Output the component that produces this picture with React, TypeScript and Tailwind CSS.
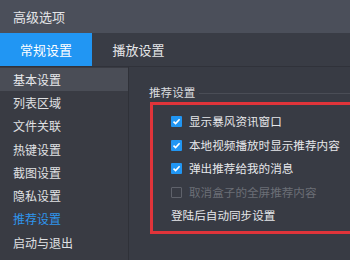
import { useState } from "react";

const navItems = [
  "基本设置",
  "列表区域",
  "文件关联",
  "热键设置",
  "截图设置",
  "隐私设置",
  "推荐设置",
  "启动与退出",
];

const options = [
  { id: 1, text: "显示暴风资讯窗口", checked: true, disabled: false },
  { id: 2, text: "本地视频播放时显示推荐内容", checked: true, disabled: false },
  { id: 3, text: "弹出推荐给我的消息", checked: true, disabled: false },
  { id: 4, text: "取消盒子的全屏推荐内容", checked: false, disabled: true },
];

const CheckBox = ({ checked, disabled }: { checked: boolean; disabled: boolean }) => {
  if (disabled) {
    return <span className="block shrink-0 w-[11px] h-[11px] border border-[#5f626b] rounded-[1px]" />;
  }
  return (
    <span className="flex shrink-0 items-center justify-center w-[11px] h-[11px] bg-[#2196f3] rounded-[1px]">
      {checked && (
        <svg width="9" height="9" viewBox="0 0 9 9">
          <path d="M1.5 4.6 L3.6 6.6 L7.6 2.2" fill="none" stroke="#fff" strokeWidth="1.6" />
        </svg>
      )}
    </span>
  );
};

const App = () => {
  const [tab, setTab] = useState(0);

  return (
    <div
      className="flex flex-col w-[350px] h-[260px] overflow-hidden bg-[#383b44] text-[#e4e5e8]"
      style={{ fontFamily: '"Noto Sans CJK SC", "Noto Sans", sans-serif' }}
    >
      <div className="flex items-center shrink-0 h-[33px] pl-[13px] bg-[#4b4f5a] text-[13px]">高级选项</div>
      <div className="flex shrink-0 h-[34px] bg-[#393c45] text-[13px] border-b border-[#30323a]">
        {["常规设置", "播放设置"].map((t, i) => (
          <div
            key={t}
            onClick={() => setTab(i)}
            className={
              i === tab
                ? "flex items-center justify-center w-[92px] bg-[#2196f3] text-white"
                : "flex items-center justify-center w-[93px] text-[#e4e5e8]"
            }
          >
            {t}
          </div>
        ))}
      </div>
      <div className="flex flex-1 min-h-0">
        <div className="flex flex-col shrink-0 w-[129px] pt-[1px] bg-[#393b43] border-r border-[#2f3138] text-[12px]">
          {navItems.map((item, i) => (
            <div
              key={item}
              className={
                i === 0
                  ? "flex items-center h-[23.3px] pl-[13px] bg-[#4a4d56] text-[#e8e9ec]"
                  : i === 6
                  ? "flex items-center h-[23.3px] pl-[13px] text-[#2f95ec]"
                  : "flex items-center h-[23.3px] pl-[13px] text-[#e0e1e4]"
              }
            >
              {item}
            </div>
          ))}
        </div>
        <div className="flex flex-col flex-1 min-w-0 overflow-hidden pt-[18px] pl-[20px] text-[11.6px]">
          <div className="flex items-center gap-[4px] h-[16px]">
            <span className="text-[#d9dade]">推荐设置</span>
            <span className="flex-1 h-px bg-[#4a4d56]" />
          </div>
          <div className="flex flex-col shrink-0 mt-[1px] ml-[1px] w-[230px] h-[132px] pt-[5px] pl-[18px] border-[3px] border-r-0 border-[#e0343a]">
            {options.map((o) => (
              <div key={o.id} className="flex items-center h-[23.5px] gap-[7px] whitespace-nowrap">
                <CheckBox checked={o.checked} disabled={o.disabled} />
                <span className={o.disabled ? "text-[#6b6e76]" : "text-[#e6e7ea]"}>{o.text}</span>
              </div>
            ))}
            <div className="flex items-center h-[23.5px] text-[#e6e7ea]">登陆后自动同步设置</div>
          </div>
        </div>
      </div>
    </div>
  );
};

export default App;
